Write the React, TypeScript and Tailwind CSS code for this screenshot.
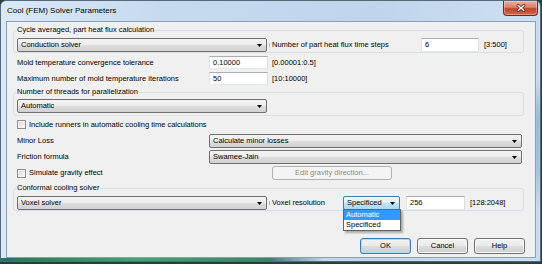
import React from "react";

const ui = "font-['Liberation_Sans',Arial,sans-serif] text-[7.5px] leading-none text-black";

function Arrow() {
  return (
    <svg width="5" height="3" viewBox="0 0 5 3" className="shrink-0">
      <path d="M0 0H5L2.5 3Z" fill="#000" />
    </svg>
  );
}

function Combo({ text, className = "", active = false }: { text: string; className?: string; active?: boolean }) {
  const skin = active
    ? "border-[#3c7fb1] bg-[linear-gradient(#ecf7fd,#dcf0fb_50%,#c1e4f7_50%,#a9d8f3)]"
    : "border-[#707070] bg-[linear-gradient(#f4f4f4,#ececec_50%,#dedede_50%,#d2d2d2)]";
  return (
    <div className={`flex h-[14px] shrink-0 items-center justify-between rounded-[2px] border pl-[3px] pr-[4px] ${skin} ${className}`}>
      <span className="whitespace-nowrap">{text}</span>
      <Arrow />
    </div>
  );
}

function TextBox({ value, className = "" }: { value: string; className?: string }) {
  return (
    <div className={`flex shrink-0 items-center border border-[#abadb3] border-b-[#e3e9ef] border-l-[#e2e3ea] border-r-[#dbdfe6] bg-white pl-[3px] ${className}`}>
      {value}
    </div>
  );
}

function Group({ label, className = "", children }: { label: string; className?: string; children: React.ReactNode }) {
  return (
    <div className={`relative ml-[6px] w-[511px] shrink-0 rounded-[3px] border border-[#d5dfe5] pl-[3px] ${className}`}>
      <span className="absolute left-[2px] top-[-6px] bg-[#f0f0f0] px-[1px] leading-[10px]">{label}</span>
      {children}
    </div>
  );
}

function Check() {
  return (
    <span className="h-[9px] w-[9px] shrink-0 border border-[#8e8f8f] bg-[linear-gradient(135deg,#d8d8d8,#fbfbfb)] shadow-[inset_0_0_0_1px_#f2f2f2]" />
  );
}

function Button({ label, def = false }: { label: string; def?: boolean }) {
  return (
    <div
      className={`flex h-[16px] w-[51px] items-center justify-center rounded-[3px] border bg-[linear-gradient(#f2f2f2,#ebebeb_50%,#dddddd_50%,#cfcfcf)] ${
        def ? "border-[#3c7fb1] shadow-[inset_0_0_0_1px_#a9dcf6]" : "border-[#707070] shadow-[inset_0_0_0_1px_#fbfbfb]"
      }`}
    >
      {label}
    </div>
  );
}

// faint orange sliver to the right of the wide combos
function OrangeMark() {
  return (
    <div className="flex w-[5px] shrink-0 justify-center">
      <span className="h-[4px] w-[1px] bg-[#eab57a]" />
    </div>
  );
}

export default function App() {
  return (
    <div className={`h-[264px] w-[542px] overflow-hidden bg-[#23403c] ${ui}`}>
      <div className="flex h-[262px] w-[541px] flex-col rounded-t-[6px] border border-[#56687a] bg-[linear-gradient(90deg,rgba(30,95,80,0.9),rgba(60,150,120,0.9)_25%,rgba(40,100,90,0.8)_50%,transparent_60%),linear-gradient(#c9dcf1_0,#c9dcf1_30%,#9fbcd6_45%,#a8c4dd_65%,#c9dcf1_80%),linear-gradient(90deg,#dbe8f6,#c6daef_30%,#c0d5ec_70%,#cddff2)] bg-[length:100%_3px,5px_100%,100%_100%] bg-[position:0_100%,right_0,0_0] bg-no-repeat pb-[3px] pl-[5px] pr-[4px]">
        {/* title bar */}
        <div className="-ml-[5px] -mr-[4px] flex h-[20px] shrink-0 items-start justify-between">
          <span className="self-center pl-[6px] text-[8px]">Cool (FEM) Solver Parameters</span>
          <div className="mr-[2px] flex h-[15px] w-[35px] items-center justify-center rounded-b-[4px] border border-t-0 border-[#6d2a20] bg-[linear-gradient(#eab0a0,#d98068_45%,#c2432b_55%,#cf6a4c)] shadow-[inset_0_0_0_1px_rgba(255,255,255,0.3)]">
            <svg width="10" height="8" viewBox="0 0 10 8">
              <path d="M2.2 1.5L7.8 6.5M7.8 1.5L2.2 6.5" stroke="#5a1d14" strokeWidth="3" strokeLinecap="round" />
              <path d="M2.2 1.5L7.8 6.5M7.8 1.5L2.2 6.5" stroke="#fff" strokeWidth="1.5" strokeLinecap="round" />
            </svg>
          </div>
        </div>

        {/* client area */}
        <div className="flex h-[237px] shrink-0 flex-col border border-[#8aa0b6] bg-[#f0f0f0]">
          <Group label="Cycle averaged, part heat flux calculation" className="mt-[8px] pt-[7px]">
            <div className="flex h-[14px] items-center">
              <Combo text="Conduction solver" className="w-[250px]" />
              <OrangeMark />
              <span className="w-[149px] shrink-0 whitespace-nowrap">Number of part heat flux time steps</span>
              <TextBox value="6" className="h-[14px] w-[58px]" />
              <span className="ml-[5px] whitespace-nowrap">[3:500]</span>
            </div>
          </Group>

          <div className="mt-[3px] flex h-[13px] items-center pl-[10px]">
            <span className="w-[192px] shrink-0 whitespace-nowrap">Mold temperature convergence tolerance</span>
            <TextBox value="0.10000" className="h-[13px] w-[59px]" />
            <span className="ml-[4px] whitespace-nowrap">[0.00001:0.5]</span>
          </div>
          <div className="mt-[3px] flex h-[13px] items-center pl-[10px]">
            <span className="w-[192px] shrink-0 whitespace-nowrap">Maximum number of mold temperature iterations</span>
            <TextBox value="50" className="h-[13px] w-[59px]" />
            <span className="ml-[4px] whitespace-nowrap">[10:10000]</span>
          </div>

          <Group label="Number of threads for parallelization" className="mt-[7px] pb-[2px] pt-[6px]">
            <Combo text="Automatic" className="w-[250px]" />
          </Group>

          <div className="mt-[4px] flex h-[9px] items-center pl-[10px]">
            <Check />
            <span className="ml-[3px] whitespace-nowrap">Include runners in automatic cooling time calculations</span>
          </div>

          <div className="mt-[5px] flex h-[14px] items-center pl-[10px]">
            <span className="w-[192px] shrink-0">Minor Loss</span>
            <Combo text="Calculate minor losses" className="w-[313px]" />
          </div>
          <div className="mt-[2px] flex h-[14px] items-center pl-[10px]">
            <span className="w-[192px] shrink-0">Friction formula</span>
            <Combo text="Swamee-Jain" className="w-[313px]" />
          </div>

          <div className="mt-[2px] flex h-[14px] items-center pl-[10px]">
            <div className="flex w-[255px] shrink-0 items-center">
              <Check />
              <span className="ml-[3px] whitespace-nowrap">Simulate gravity effect</span>
            </div>
            <div className="flex h-[14px] w-[120px] items-center justify-center rounded-[3px] border border-[#adb2b5] bg-[#f4f4f4] text-[#8a8a8a]">
              Edit gravity direction...
            </div>
          </div>

          <Group label="Conformal cooling solver" className="mt-[8px] pt-[7px]">
            <div className="flex h-[14px] items-center">
              <Combo text="Voxel solver" className="w-[250px]" />
              <OrangeMark />
              <span className="w-[71px] shrink-0 whitespace-nowrap">Voxel resolution</span>
              <div className="relative shrink-0">
                <Combo text="Specificed" active className="w-[57px]" />
                <div className="absolute left-0 top-[13px] z-10 flex w-[58px] flex-col border border-[#646464] bg-white shadow-[2px_2px_2px_rgba(0,0,0,0.3)]">
                  <span className="flex h-[10px] items-center bg-[#3399ff] pl-[2px] text-white">Automatic</span>
                  <span className="flex h-[10px] items-center pl-[2px]">Specificed</span>
                </div>
              </div>
              <TextBox value="256" className="ml-[6px] h-[14px] w-[59px]" />
              <span className="ml-[5px] whitespace-nowrap">[128:2048]</span>
            </div>
          </Group>

          <div className="mt-[27px] flex justify-end gap-[6px] pr-[10px]">
            <Button label="OK" def />
            <Button label="Cancel" />
            <Button label="Help" />
          </div>
        </div>
      </div>
    </div>
  );
}
